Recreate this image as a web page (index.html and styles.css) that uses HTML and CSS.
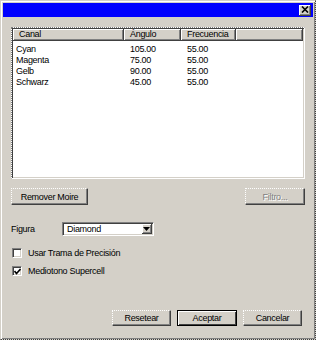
FILE: index.html
```html
<!DOCTYPE html>
<html lang="es">

<head>
    <meta charset="UTF-8">
    <title>Tramado</title>
    <link rel="stylesheet" href="styles.css">
</head>

<body>
    <div class="ventana">
        <div class="titulo">
            <span class="cerrar">
                <svg width="8" height="7" viewBox="0 0 8 7">
                    <path d="M1 0.5 L7 6.5 M7 0.5 L1 6.5" stroke="#000" stroke-width="1.6" />
                </svg>
            </span>
        </div>

        <div class="contenido">
            <div class="lista">
                <div class="cabecera">
                    <span class="col1">Canal</span>
                    <span class="col2">Ángulo</span>
                    <span class="col3">Frecuencia</span>
                    <span class="resto"></span>
                </div>
                <div class="filas">
                    <div class="fila"><span class="c1">Cyan</span><span class="c2">105.00</span><span class="c3">55.00</span></div>
                    <div class="fila"><span class="c1">Magenta</span><span class="c2">75.00</span><span class="c3">55.00</span></div>
                    <div class="fila"><span class="c1">Gelb</span><span class="c2">90.00</span><span class="c3">55.00</span></div>
                    <div class="fila"><span class="c1">Schwarz</span><span class="c2">45.00</span><span class="c3">55.00</span></div>
                </div>
            </div>

            <div class="acciones">
                <span class="boton remover">Remover Moire</span>
                <span class="boton filtro deshabilitado">Filtro...</span>
            </div>

            <div class="figura">
                <span class="etiqueta">Figura</span>
                <span class="combo">
                    <span class="valor">Diamond</span>
                    <span class="flecha">
                        <svg width="7" height="4" viewBox="0 0 7 4"><path d="M0 0 H7 L3.5 4 Z" fill="#000" /></svg>
                    </span>
                </span>
            </div>

            <label class="opcion">
                <span class="caja"></span>
                <span>Usar Trama de Precisión</span>
            </label>
            <label class="opcion segunda">
                <span class="caja">
                    <svg width="7" height="7" viewBox="0 0 7 7"><path d="M0.5 3 L2.5 5.5 L6.5 1" stroke="#000" stroke-width="1.6" fill="none" /></svg>
                </span>
                <span>Mediotono Supercell</span>
            </label>

            <div class="pie">
                <span class="boton">Resetear</span>
                <span class="boton predeterminado">Aceptar</span>
                <span class="boton">Cancelar</span>
            </div>
        </div>
    </div>
</body>

</html>
```

FILE: styles.css
```css
body {
    margin: 0;
    background-color: #d4d0c8;
    font-family: "Liberation Sans", Arial, sans-serif;
    font-size: 9px;
    letter-spacing: -0.3px;
    color: #000;
}

.ventana {
    width: 316px;
    height: 340px;
    box-sizing: border-box;
    border-left: 1px solid #d4d0c8;
    border-top: 1px solid #d4d0c8;
    border-right: 1px dotted #404040;
    border-bottom: 1px dotted #404040;
    box-shadow: inset 1px 1px 0 #fff, inset -1px -1px 0 #808080;
    padding: 2px;
    display: flex;
    flex-direction: column;
}

.titulo {
    height: 14px;
    background-color: #0000ff;
    display: flex;
    justify-content: flex-end;
    align-items: center;
    padding-right: 2px;
}

.cerrar {
    width: 12px;
    height: 11px;
    box-sizing: border-box;
    background-color: #d4d0c8;
    border-right: 1px solid #404040;
    border-bottom: 1px solid #404040;
    box-shadow: inset 1px 1px 0 #fff, inset -1px -1px 0 #808080;
    display: flex;
    justify-content: center;
    align-items: center;
}

.contenido {
    flex: 1;
    display: flex;
    flex-direction: column;
    padding: 10px 8px 11px 8px;
}

.lista {
    height: 152px;
    box-sizing: border-box;
    background-color: #fff;
    border-top: 1px dotted #808080;
    border-left: 1px dotted #808080;
    border-right: 1px solid #fff;
    border-bottom: 1px dotted #ffffff;
    box-shadow: inset 1px 1px 0 #404040, inset -1px -1px 0 #d4d0c8;
    padding: 1px;
}

.cabecera {
    display: flex;
    height: 12px;
}

.cabecera span {
    box-sizing: border-box;
    background-color: #d4d0c8;
    border-right: 1px solid #404040;
    border-bottom: 1px solid #404040;
    box-shadow: inset 1px 1px 0 #fff, inset -1px -1px 0 #808080;
    padding-left: 6px;
    line-height: 11px;
}

.col1 {
    width: 111px;
}

.col2 {
    width: 57px;
}

.col3 {
    width: 55px;
}

.resto {
    flex: 1;
}

.filas {
    padding-top: 3px;
}

.fila {
    display: flex;
    height: 11px;
    line-height: 11px;
}

.c1 {
    width: 111px;
    padding-left: 3px;
    box-sizing: border-box;
}

.c2 {
    width: 57px;
    padding-left: 6px;
    box-sizing: border-box;
}

.c3 {
    width: 55px;
    padding-left: 6px;
    box-sizing: border-box;
}

.acciones {
    display: flex;
    justify-content: space-between;
    margin-top: 9px;
}

.boton {
    display: flex;
    justify-content: center;
    align-items: center;
    height: 17px;
    box-sizing: border-box;
    border-top: 1px dotted #fff;
    border-left: 1px dotted #fff;
    border-right: 1px solid #404040;
    border-bottom: 1px solid #404040;
    box-shadow: inset -1px -1px 0 #808080;
}

.remover {
    width: 77px;
}

.filtro {
    width: 60px;
}

.deshabilitado {
    color: #808080;
    text-shadow: 1px 1px 0 #fff;
}

.figura {
    display: flex;
    align-items: center;
    margin-top: 17px;
}

.etiqueta {
    width: 51px;
}

.combo {
    width: 92px;
    height: 14px;
    box-sizing: border-box;
    background-color: #fff;
    border-top: 1px solid #808080;
    border-left: 1px solid #808080;
    border-right: 1px solid #fff;
    border-bottom: 1px solid #fff;
    box-shadow: inset 1px 1px 0 #404040, inset -1px -1px 0 #d4d0c8;
    display: flex;
    align-items: center;
    padding: 1px;
}

.valor {
    flex: 1;
    padding-left: 3px;
}

.flecha {
    width: 10px;
    height: 10px;
    box-sizing: border-box;
    background-color: #d4d0c8;
    border-right: 1px solid #404040;
    border-bottom: 1px solid #404040;
    box-shadow: inset 1px 1px 0 #fff, inset -1px -1px 0 #808080;
    display: flex;
    justify-content: center;
    align-items: center;
}

.opcion {
    display: flex;
    align-items: center;
    gap: 6px;
    margin-top: 12px;
    padding-left: 1px;
    height: 10px;
}

.segunda {
    margin-top: 8px;
}

.caja {
    width: 10px;
    height: 10px;
    box-sizing: border-box;
    background-color: #fff;
    border-top: 1px solid #808080;
    border-left: 1px solid #808080;
    border-right: 1px solid #fff;
    border-bottom: 1px solid #fff;
    box-shadow: inset 1px 1px 0 #404040, inset -1px -1px 0 #d4d0c8;
    display: flex;
    justify-content: center;
    align-items: center;
}

.pie {
    margin-top: auto;
    display: flex;
    justify-content: flex-end;
    gap: 6px;
    padding-right: 3px;
}

.pie .boton {
    width: 59px;
    height: 16px;
}

.pie .predeterminado {
    width: 60px;
    border: 1px solid #000;
    box-shadow: inset 1px 1px 0 #fff, inset -1px -1px 0 #404040;
}
```
